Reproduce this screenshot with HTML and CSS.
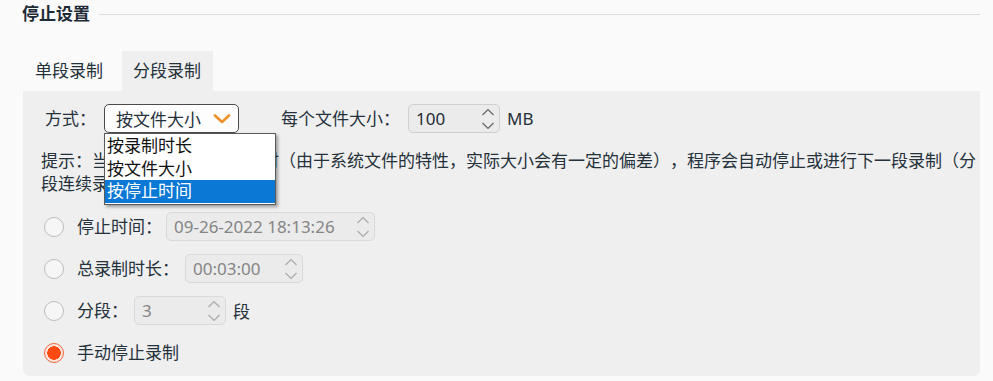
FILE: index.html
```html
<!DOCTYPE html>
<html lang="zh-CN">
<head>
<meta charset="utf-8">
<link rel="stylesheet" href="styles.css">
</head>
<body>
<div class="page">
  <div class="section-head">
    <span class="section-title">停止设置</span>
    <span class="section-line"></span>
  </div>
  <div class="tabs">
    <div class="tab">单段录制</div>
    <div class="tab active">分段录制</div>
  </div>
  <div class="panel">
    <div class="row first">
      <span class="label">方式：</span>
      <div class="select-wrap">
        <div class="select">
          <span>按文件大小</span>
          <svg class="chev" width="18" height="10" viewBox="0 0 18 10"><path d="M2 1.5 L9 8 L16 1.5" fill="none" stroke="#f0902a" stroke-width="2.6" stroke-linecap="round" stroke-linejoin="round"/></svg>
        </div>
        <div class="popup">
          <div class="item">按录制时长</div>
          <div class="item">按文件大小</div>
          <div class="item selected">按停止时间</div>
        </div>
      </div>
      <span class="label gap-label">每个文件大小：</span>
      <div class="spin size-spin">
        <span class="val">100</span>
        <span class="arrows">
          <svg width="14" height="8" viewBox="0 0 14 8"><path d="M1.5 7 L7 1.5 L12.5 7" fill="none" stroke="#666" stroke-width="1.2"/></svg>
          <svg width="14" height="8" viewBox="0 0 14 8"><path d="M1.5 1 L7 6.5 L12.5 1" fill="none" stroke="#666" stroke-width="1.2"/></svg>
        </span>
      </div>
      <span class="unit">MB</span>
    </div>
    <p class="hint">提示：当文件大小达到设定值时（由于系统文件的特性，实际大小会有一定的偏差），程序会自动停止或进行下一段录制（分段连续录制）。</p>
    <div class="options">
      <div class="row opt">
        <span class="radio"></span>
        <span class="label">停止时间：</span>
        <div class="spin disabled dt-spin">
          <span class="val">09-26-2022 18:13:26</span>
          <span class="arrows">
            <svg width="14" height="8" viewBox="0 0 14 8"><path d="M1.5 7 L7 1.5 L12.5 7" fill="none" stroke="#aaa" stroke-width="1.2"/></svg>
            <svg width="14" height="8" viewBox="0 0 14 8"><path d="M1.5 1 L7 6.5 L12.5 1" fill="none" stroke="#aaa" stroke-width="1.2"/></svg>
          </span>
        </div>
      </div>
      <div class="row opt">
        <span class="radio"></span>
        <span class="label">总录制时长：</span>
        <div class="spin disabled dur-spin">
          <span class="val">00:03:00</span>
          <span class="arrows">
            <svg width="14" height="8" viewBox="0 0 14 8"><path d="M1.5 7 L7 1.5 L12.5 7" fill="none" stroke="#aaa" stroke-width="1.2"/></svg>
            <svg width="14" height="8" viewBox="0 0 14 8"><path d="M1.5 1 L7 6.5 L12.5 1" fill="none" stroke="#aaa" stroke-width="1.2"/></svg>
          </span>
        </div>
      </div>
      <div class="row opt">
        <span class="radio"></span>
        <span class="label">分段：</span>
        <div class="spin disabled seg-spin">
          <span class="val">3</span>
          <span class="arrows">
            <svg width="14" height="8" viewBox="0 0 14 8"><path d="M1.5 7 L7 1.5 L12.5 7" fill="none" stroke="#aaa" stroke-width="1.2"/></svg>
            <svg width="14" height="8" viewBox="0 0 14 8"><path d="M1.5 1 L7 6.5 L12.5 1" fill="none" stroke="#aaa" stroke-width="1.2"/></svg>
          </span>
        </div>
        <span class="unit">段</span>
      </div>
      <div class="row opt">
        <span class="radio checked"></span>
        <span class="label">手动停止录制</span>
      </div>
    </div>
  </div>
</div>
</body>
</html>
```

FILE: styles.css
```css
html, body {
  margin: 0;
  padding: 0;
  background: #fafafa;
}
body {
  width: 993px;
  height: 381px;
  overflow: hidden;
  font-family: "Noto Sans", "Noto Sans CJK SC", sans-serif;
  font-size: 17px;
  color: #25313b;
  text-spacing-trim: space-all;
}
.page {
  padding: 0 13px 0 23px;
}
.section-head {
  display: flex;
  align-items: center;
  height: 28px;
}
.section-title {
  font-weight: bold;
  margin-left: -1px;
  color: #1e2b36;
  line-height: 28px;
}
.section-line {
  flex: 1;
  height: 1px;
  background: #dcdcdc;
  margin-left: 9px;
}
.tabs {
  display: flex;
  margin-top: 23px;
  gap: 8px;
}
.tab {
  height: 40px;
  line-height: 40px;
  padding: 0 11px 0 12px;
}
.tab.active {
  background: #efefef;
  padding: 0 12px 0 11px;
}
.panel {
  background: #efefef;
  border-radius: 0 0 7px 7px;
  padding: 13px 2px 8px 18px;
  height: 264px;
}
.row {
  display: flex;
  align-items: center;
  height: 29px;
}
.row.first {
  padding-left: 4px;
}
.label {
  white-space: nowrap;
  line-height: 29px;
}
.gap-label {
  margin-left: 42px;
}
.select-wrap {
  position: relative;
  margin-left: 8px;
}
.select {
  box-sizing: border-box;
  width: 135px;
  height: 29px;
  border: 1px solid #4a4a4a;
  border-radius: 5px;
  background: #fdfdfd;
  display: flex;
  align-items: center;
  justify-content: space-between;
  padding: 0 7px 0 11px;
}
.chev {
  display: block;
}
.popup {
  position: absolute;
  left: 0;
  top: 29px;
  width: 172px;
  box-sizing: border-box;
  background: #fff;
  border: 1px solid #5a5a5a;
  box-shadow: 2px 2px 3px rgba(0,0,0,0.35);
  z-index: 5;
  padding: 1px 0 1px 0;
}
.item {
  height: 22.5px;
  line-height: 22.5px;
  padding-left: 2px;
  color: #111;
}
.item.selected {
  background: #0a78d4;
  color: #fff;
}
.spin {
  box-sizing: border-box;
  height: 29px;
  border: 1px solid #cfcfcf;
  border-radius: 5px;
  background: #ebebeb;
  display: flex;
  align-items: center;
  justify-content: space-between;
  padding: 0 4px 0 7px;
  margin-left: 8px;
}
.spin .val {
  line-height: 27px;
}
.arrows {
  display: flex;
  flex-direction: column;
  gap: 6px;
}
.arrows svg {
  display: block;
}
.size-spin {
  width: 92px;
  color: #1e2b36;
}
.unit {
  margin-left: 7px;
}
.hint {
  margin: 16px 0 0 0;
  line-height: 23px;
}
.options {
  display: flex;
  flex-direction: column;
  gap: 13px;
  margin-top: 17px;
}
.opt {
  padding-left: 3px;
}
.radio {
  box-sizing: border-box;
  width: 20px;
  height: 20px;
  border-radius: 50%;
  border: 1.5px solid #bdbdbd;
  background: #f6f6f6;
  margin-right: 13px;
  flex: none;
}
.radio.checked {
  border: 1.5px solid #f3643a;
  background: radial-gradient(circle, #ff4a12 0 6.5px, #fde6dc 7px 8.5px, transparent 9px);
}
.disabled {
  color: #858585;
  margin-left: 4px;
  border-color: #d9d9d9;
}
.dt-spin {
  width: 209px;
}
.dur-spin {
  width: 118px;
  margin-left: 6px;
}
.seg-spin {
  width: 92px;
  margin-left: 6px;
}
```
